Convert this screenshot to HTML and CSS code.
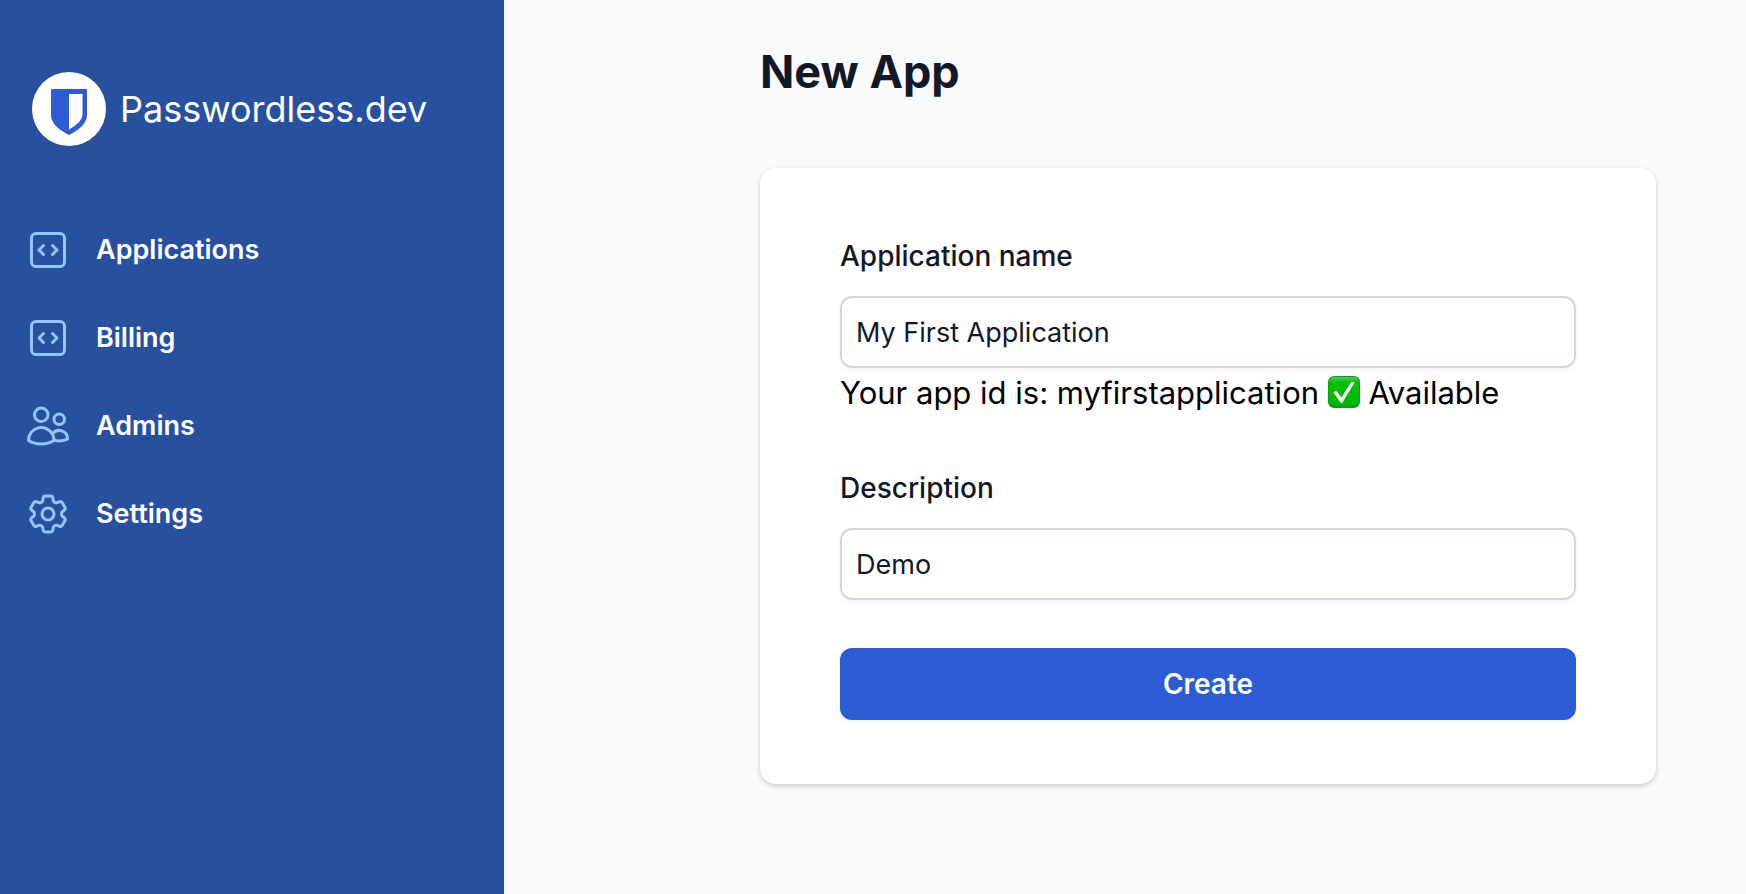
FILE: index.html
```html
<!DOCTYPE html>
<html lang="en">
<head>
<meta charset="utf-8">
<meta name="viewport" content="width=device-width, initial-scale=1">
<title>New App - Passwordless.dev</title>
<link rel="stylesheet" href="styles.css">
</head>
<body>
<div class="layout">
  <aside class="sidebar">
    <a class="brand" href="#">
      <svg class="brand-mark" viewBox="0 0 74 74" aria-hidden="true">
        <circle cx="37" cy="37" r="37" fill="#fff"/>
        <path fill="#2d5bd4" fill-rule="evenodd" d="M20 17H54Q55 17 55 18V43Q55 54 37 63Q19 54 19 43V18Q19 17 20 17ZM37 22V57.500Q50.500 50 50.500 42.500V22Z"/>
      </svg>
      <span class="brand-name">Passwordless.dev</span>
    </a>
    <nav class="nav">
      <a class="nav-link" href="#">
        <svg class="nav-icon" viewBox="0 0 24 24" aria-hidden="true"><path d="M14.25 9.75L16.5 12l-2.25 2.25m-4.5 0L7.5 12l2.25-2.25M6 20.25h12A2.25 2.25 0 0020.25 18V6A2.25 2.25 0 0018 3.75H6A2.25 2.25 0 003.75 6v12A2.25 2.25 0 006 20.25z"/></svg>
        Applications
      </a>
      <a class="nav-link" href="#">
        <svg class="nav-icon" viewBox="0 0 24 24" aria-hidden="true"><path d="M14.25 9.75L16.5 12l-2.25 2.25m-4.5 0L7.5 12l2.25-2.25M6 20.25h12A2.25 2.25 0 0020.25 18V6A2.25 2.25 0 0018 3.75H6A2.25 2.25 0 003.75 6v12A2.25 2.25 0 006 20.25z"/></svg>
        Billing
      </a>
      <a class="nav-link" href="#">
        <svg class="nav-icon" viewBox="0 0 24 24" aria-hidden="true"><path d="M15 19.128a9.38 9.38 0 002.625.372 9.337 9.337 0 004.121-.952 4.125 4.125 0 00-7.533-2.493M15 19.128v-.003c0-1.113-.285-2.16-.786-3.07M15 19.128v.106A12.318 12.318 0 018.624 21c-2.331 0-4.512-.645-6.374-1.766l-.001-.109a6.375 6.375 0 0111.964-3.07M12 6.375a3.375 3.375 0 11-6.75 0 3.375 3.375 0 016.75 0zm8.25 2.25a2.625 2.625 0 11-5.25 0 2.625 2.625 0 015.25 0z"/></svg>
        Admins
      </a>
      <a class="nav-link" href="#">
        <svg class="nav-icon" viewBox="0 0 24 24" aria-hidden="true"><path d="M9.594 3.94c.09-.542.56-.94 1.11-.94h2.593c.55 0 1.02.398 1.11.94l.213 1.281c.063.374.313.686.645.87.074.04.147.083.22.127.324.196.72.257 1.075.124l1.217-.456a1.125 1.125 0 011.37.49l1.296 2.247a1.125 1.125 0 01-.26 1.431l-1.003.827c-.293.24-.438.613-.431.992a6.759 6.759 0 010 .255c-.007.378.138.75.43.99l1.005.828c.424.35.534.954.26 1.43l-1.298 2.247a1.125 1.125 0 01-1.369.491l-1.217-.456c-.355-.133-.75-.072-1.076.124a6.57 6.57 0 01-.22.128c-.331.183-.581.495-.644.869l-.213 1.28c-.09.543-.56.941-1.11.941h-2.594c-.55 0-1.02-.398-1.11-.94l-.213-1.281c-.062-.374-.312-.686-.644-.87a6.52 6.52 0 01-.22-.127c-.325-.196-.72-.257-1.076-.124l-1.217.456a1.125 1.125 0 01-1.369-.49l-1.297-2.247a1.125 1.125 0 01.26-1.431l1.004-.827c.292-.24.437-.613.43-.992a6.932 6.932 0 010-.255c.007-.378-.138-.75-.43-.99l-1.004-.828a1.125 1.125 0 01-.26-1.43l1.297-2.247a1.125 1.125 0 011.37-.491l1.216.456c.356.133.751.072 1.076-.124.072-.044.146-.087.22-.128.332-.183.582-.495.644-.869l.214-1.281z"/><path d="M15 12a3 3 0 11-6 0 3 3 0 016 0z"/></svg>
        Settings
      </a>
    </nav>
  </aside>
  <main class="main">
    <h1 class="title">New App</h1>
    <form class="card">
      <div class="field">
        <label class="label" for="app-name">Application name</label>
        <input class="input" id="app-name" type="text" value="My First Application">
        <p class="hint">Your app id is: myfirstapplication
          <svg class="check" viewBox="0 0 32 32" role="img" aria-label="Check">
            <defs>
              <linearGradient id="check-fill" x1="0" y1="0" x2="0" y2="1">
                <stop offset="0" stop-color="#52c953"/>
                <stop offset=".18" stop-color="#08bd0b"/>
                <stop offset=".9" stop-color="#00b900"/>
                <stop offset="1" stop-color="#099b12"/>
              </linearGradient>
            </defs>
            <rect width="32" height="32" rx="6" fill="#129b1b"/>
            <rect x="1" y="1" width="30" height="30" rx="5" fill="url(#check-fill)"/>
            <path fill="#fff" d="M5.500 16.500Q7 14 9 15.500L13.500 21.500L22.500 7Q24 5.500 26.500 6.500L14.500 26.500Q13.500 28 12.500 26.500Z"/>
          </svg>
          Available</p>
      </div>
      <div class="field">
        <label class="label" for="description">Description</label>
        <input class="input" id="description" type="text" value="Demo">
      </div>
      <button class="button" type="button">Create</button>
    </form>
  </main>
</div>
</body>
</html>
```
FILE: styles.css
```css
*, *::before, *::after {
  box-sizing: border-box;
}

body {
  margin: 0;
  font-family: Inter, "Liberation Sans", sans-serif;
  font-size: 28px;
  line-height: 48px;
  color: #111827;
  background: #f9fafc;
}

.layout {
  display: flex;
  min-height: 100vh;
}

.sidebar {
  flex: 0 0 504px;
  padding: 72px 16px 32px;
  background: #27509e;
}

.brand {
  display: flex;
  align-items: center;
  gap: 14px;
  padding-left: 16px;
  color: #fff;
  text-decoration: none;
}

.brand-mark {
  width: 74px;
  height: 74px;
}

.brand-name {
  font-size: 36px;
  font-weight: 400;
}

.nav {
  display: flex;
  flex-direction: column;
  gap: 8px;
  margin-top: 64px;
}

.nav-link {
  display: flex;
  align-items: center;
  gap: 24px;
  padding: 16px 8px;
  font-size: 27px;
  font-weight: 600;
  color: #fff;
  text-decoration: none;
}

.nav-icon {
  width: 48px;
  height: 48px;
  fill: none;
  stroke: #93c5fd;
  stroke-width: 1.5;
  stroke-linecap: round;
  stroke-linejoin: round;
}

.main {
  flex: 1;
  padding: 40px 90px 64px 256px;
}

.title {
  margin: 0;
  font-size: 45px;
  font-weight: 700;
  line-height: 64px;
}

.card {
  display: flex;
  flex-direction: column;
  gap: 48px;
  margin-top: 64px;
  padding: 64px 80px;
  border-radius: 16px;
  background: #fff;
  box-shadow: 0 2px 6px rgba(0, 0, 0, .1), 0 2px 4px rgba(0, 0, 0, .1);
}

.label {
  display: block;
  margin-bottom: 16px;
  font-weight: 500;
}

.input {
  display: block;
  width: 100%;
  height: 72px;
  padding: 0 14px;
  border: 2px solid #d1d5db;
  border-radius: 12px;
  font: inherit;
  font-size: 27px;
  color: inherit;
  background: #fff;
  box-shadow: 0 2px 4px rgba(0, 0, 0, .05);
}

.hint {
  margin: 0;
  padding-top: 2px;
  font-size: 31px;
  line-height: 46px;
  color: #000;
}

.check {
  width: 32px;
  height: 32px;
  vertical-align: -4px;
}

.button {
  height: 72px;
  border: 0;
  border-radius: 12px;
  font: inherit;
  font-weight: 600;
  color: #fff;
  background: #2d5bd4;
  box-shadow: 0 2px 4px rgba(0, 0, 0, .05);
}
```
